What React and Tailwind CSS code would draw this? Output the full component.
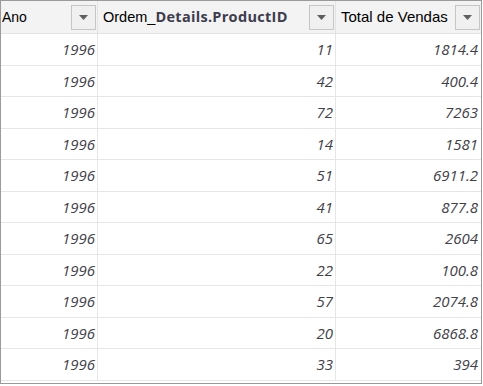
import React from "react";

const rows = [
  ["1996", "11", "1814.4"],
  ["1996", "42", "400.4"],
  ["1996", "72", "7263"],
  ["1996", "14", "1581"],
  ["1996", "51", "6911.2"],
  ["1996", "41", "877.8"],
  ["1996", "65", "2604"],
  ["1996", "22", "100.8"],
  ["1996", "57", "2074.8"],
  ["1996", "20", "6868.8"],
  ["1996", "33", "394"],
];

function FilterButton() {
  return (
    <div className="w-[25px] h-[25px] shrink-0 border border-[#c6c6c6] bg-[#f0f0f0] flex items-center justify-center">
      <svg width="9" height="5" viewBox="0 0 9 5">
        <path d="M0 0 L9 0 L4.5 5 Z" fill="#5f5f5f" />
      </svg>
    </div>
  );
}

export default function App() {
  return (
    <div className="w-[483px] h-[386px] bg-white">
      <div className="w-[482px] h-[384px] border border-[#9a9a9a] overflow-hidden bg-white">
        <div className="flex h-[33px] bg-[#f3f3f3] border-b border-[#e3e3e3]">
          <div className="w-[97px] flex items-center justify-between pl-[1px] pr-[1px] border-r border-[#e3e3e3]">
            <span className="text-[14px] text-black font-['Liberation_Sans',Arial,sans-serif]">Ano</span>
            <FilterButton />
          </div>
          <div className="w-[238px] flex items-center justify-between pl-[5px] pr-[1px] border-r border-[#e3e3e3]">
            <span className="flex items-baseline">
              <span className="text-[14.5px] text-black font-['Liberation_Sans',Arial,sans-serif]">Ordem_</span>
              <span className="text-[14.5px] tracking-[0.3px] font-bold text-[#3d3d4d] font-['Open_Sans',sans-serif]">Details.ProductID</span>
            </span>
            <FilterButton />
          </div>
          <div className="flex-1 flex items-center justify-between pl-[5px] pr-[1px]">
            <span className="text-[15px] text-black font-['Liberation_Sans',Arial,sans-serif]">Total de Vendas</span>
            <FilterButton />
          </div>
        </div>
        {rows.map((r, i) => (
          <div key={i} className="flex h-[31.5px] border-b border-[#e6e6e6] font-['Open_Sans',sans-serif] italic font-medium text-[15px] text-[#3f4148]">
            <div className="w-[97px] flex items-center justify-end pr-[2px] border-r border-[#e6e6e6]">{r[0]}</div>
            <div className="w-[238px] flex items-center justify-end pr-[2px] border-r border-[#e6e6e6]">{r[1]}</div>
            <div className="flex-1 flex items-center justify-end pr-[3px]">{r[2]}</div>
          </div>
        ))}
      </div>
    </div>
  );
}
